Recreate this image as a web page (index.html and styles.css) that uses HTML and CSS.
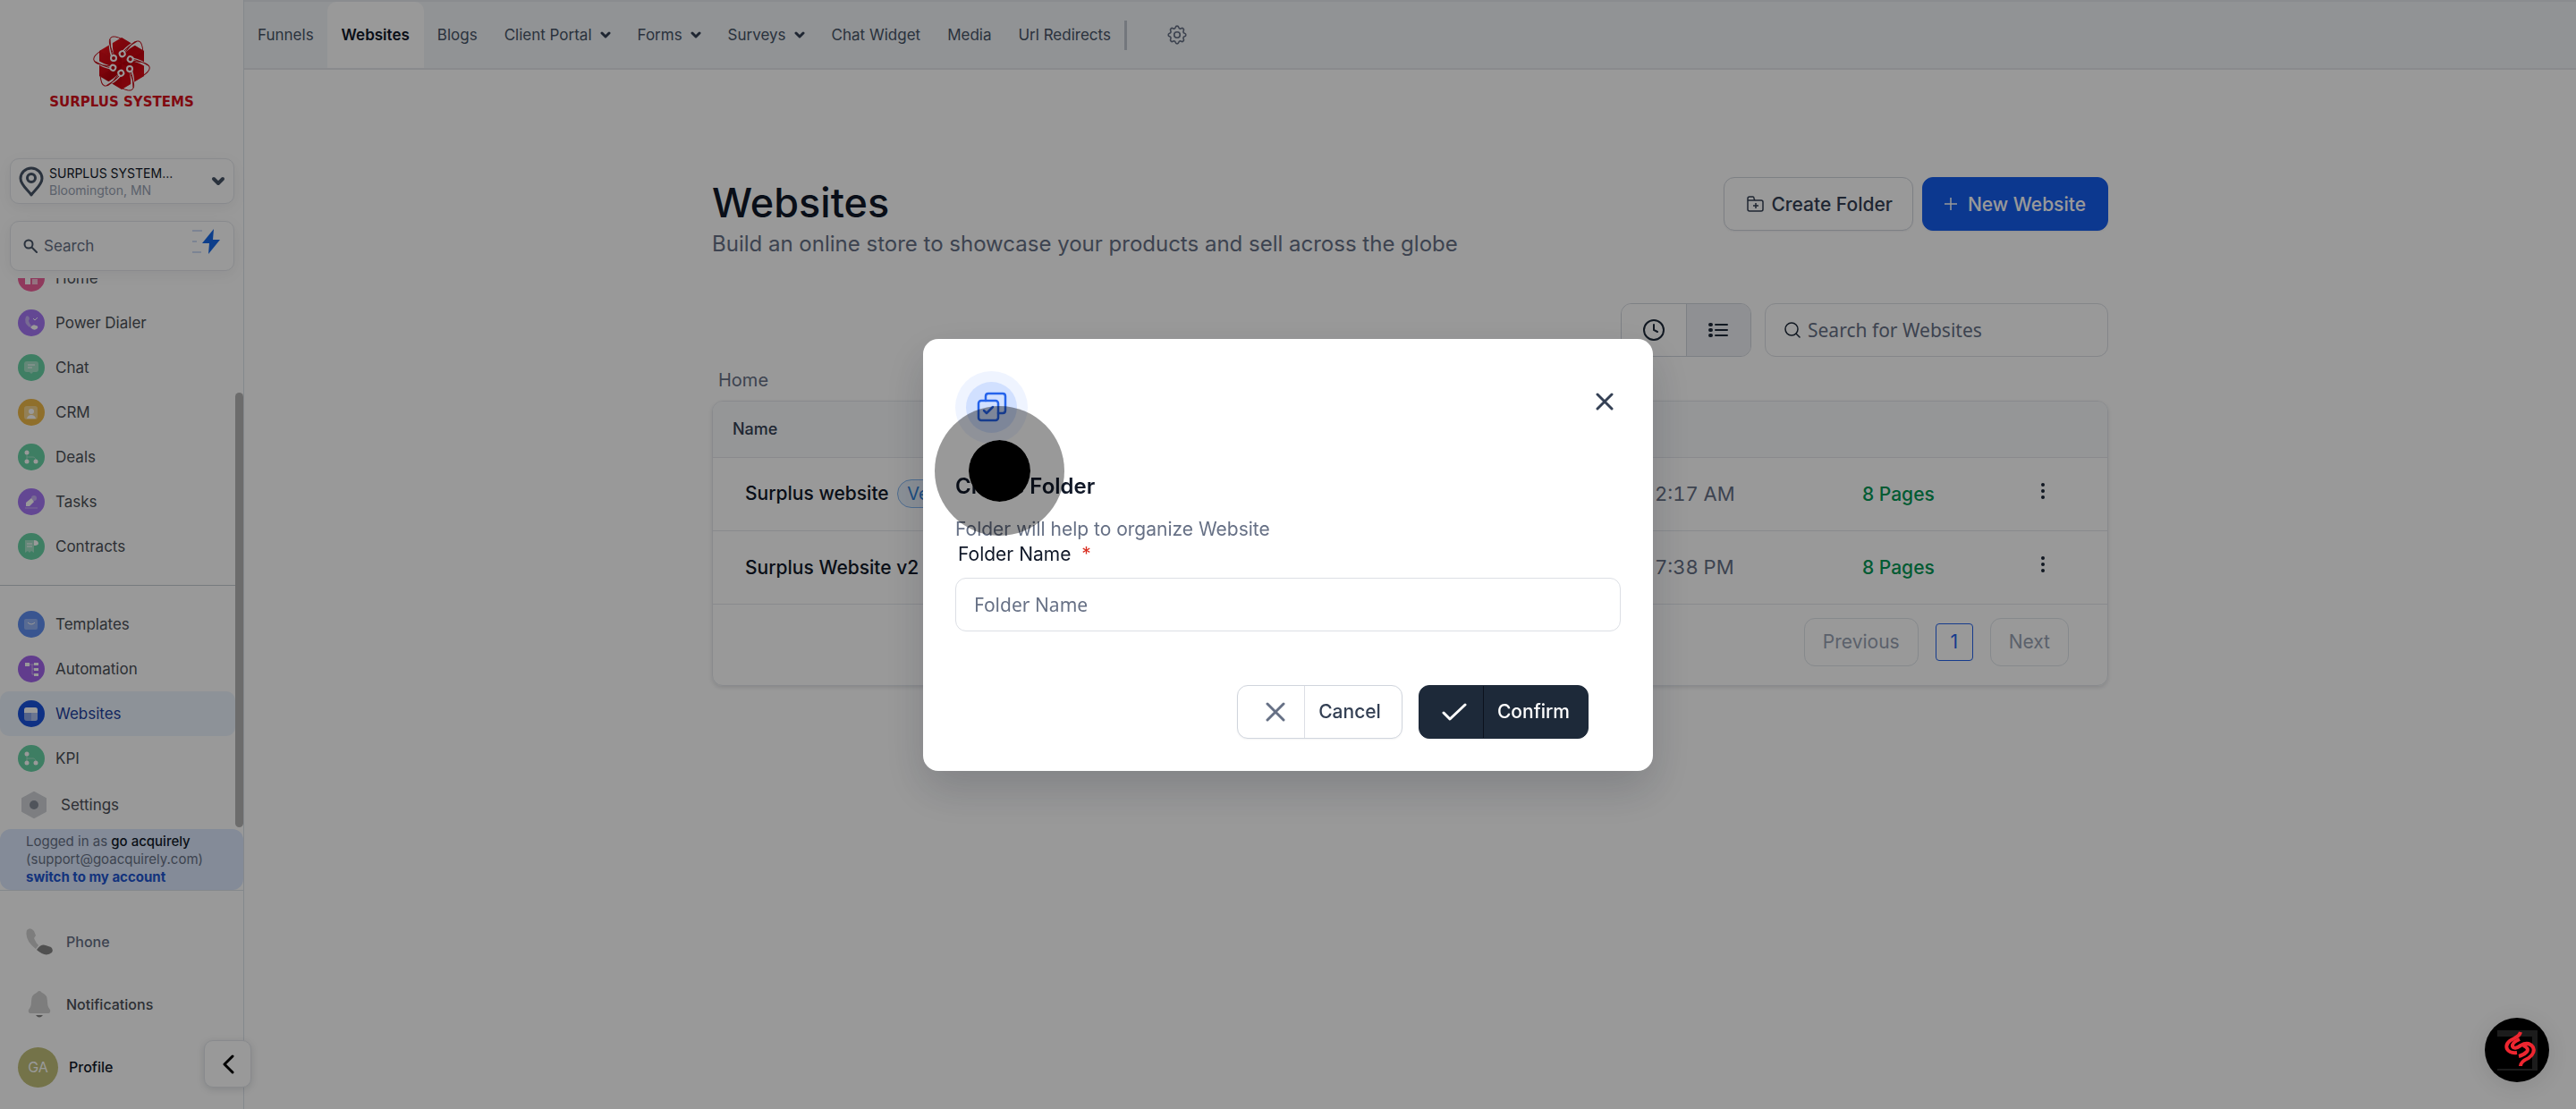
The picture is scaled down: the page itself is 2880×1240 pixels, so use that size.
FILE: index.html
```html
<!DOCTYPE html>
<html lang="en">

<head>
    <meta charset="UTF-8">
    <meta name="viewport" content="width=device-width, initial-scale=1.0">
    <title>Websites</title>
    <link rel="stylesheet" href="styles.css">
</head>

<body>
    <div class="app">
        <!-- Sidebar -->
        <aside class="sidebar">
            <div class="logo">
                <svg class="logo-mark" width="64" height="64" viewBox="0 0 64 64">
                    <defs>
                        <linearGradient id="logoRed" x1="0" y1="0" x2="1" y2="1">
                            <stop offset="0" stop-color="#ff1a22" />
                            <stop offset="0.5" stop-color="#b8000c" />
                            <stop offset="1" stop-color="#f0101c" />
                        </linearGradient>
                        <g id="arm">
                            <path d="M20 5Q19 15 22 24" fill="none" stroke="#fff" stroke-width="4" />
                            <path d="M24 24C20 15 16 7 20 3Q23 0 33 5M19 5Q19 16 22 24" fill="none" stroke="#c4101a" stroke-width="1" />
                            <circle cx="23" cy="26" r="3" fill="#c00512" stroke="#fff" stroke-width="2" />
                        </g>
                    </defs>
                    <path d="M32 3L57 18V46L32 61L7 46V18Z" fill="url(#logoRed)" />
                    <path d="M32 32L32 3L57 18ZM32 32L57 46L32 61ZM32 32L7 46V18Z" fill="#d60a16" opacity="0.6" />
                    <use href="#arm" />
                    <use href="#arm" transform="rotate(60 32 32)" />
                    <use href="#arm" transform="rotate(120 32 32)" />
                    <use href="#arm" transform="rotate(180 32 32)" />
                    <use href="#arm" transform="rotate(240 32 32)" />
                    <use href="#arm" transform="rotate(300 32 32)" />
                </svg>
                <span class="logo-text">SURPLUS SYSTEMS</span>
            </div>

            <button class="location" type="button">
                <svg width="28" height="34" viewBox="0 0 28 34" fill="none" stroke="#475467" stroke-width="3">
                    <path d="M14 32C11 27 2 21 2 13.500A12 11.500 0 0 1 26 13.500C26 21 17 27 14 32Z" stroke-linejoin="round" />
                    <circle cx="14" cy="13" r="4.500" />
                </svg>
                <span class="location-text">
                    <span class="location-name">SURPLUS SYSTEM...</span>
                    <span class="location-city">Bloomington, MN</span>
                </span>
                <svg width="16" height="12" viewBox="0 0 16 12" fill="none" stroke="#475467" stroke-width="4" stroke-linecap="round" stroke-linejoin="round">
                    <path d="M3 3L8 8L13 3" />
                </svg>
            </button>

            <div class="side-search">
                <svg width="16" height="16" viewBox="0 0 16 16" fill="none" stroke="#475467" stroke-width="2" stroke-linecap="round">
                    <circle cx="6" cy="6" r="4.500" />
                    <path d="M10 10L15 15" />
                </svg>
                <input type="text" placeholder="Search" aria-label="Search">
                <svg class="bolt" width="32" height="30" viewBox="0 0 32 30">
                    <path d="M0 3H11M0 15H5M0 27H10" stroke="#cfdcf5" stroke-width="2" />
                    <path d="M24 1L11 17H19L18 29L31 13H23Z" fill="#1668e8" />
                </svg>
            </div>

            <nav class="side-nav">
                <ul class="menu menu-top">
                    <li><a href="#">
                        <svg viewBox="0 0 30 30"><circle cx="15" cy="15" r="15" fill="#f0629c" /><path d="M8 8H14V22H8Z" fill="#fff" /><path d="M16 8H22V14H16ZM16 16H22V22H16Z" fill="#fff" opacity="0.6" /></svg>
                        Home</a></li>
                    <li><a href="#">
                        <svg viewBox="0 0 30 30"><circle cx="15" cy="15" r="15" fill="#a677f6" /><path d="M9 8Q12 6 13 10L12 13Q13 16 15 18L13 20Q6 15 9 8Z" fill="#c9b2f5" /><path d="M14 20Q17 16 20 18Q23 18 22 21Q18 25 14 20Z" fill="#fff" /><path d="M17 10L19 12L22 9" fill="none" stroke="#fff" stroke-width="1" /></svg>
                        Power Dialer</a></li>
                    <li><a href="#">
                        <svg viewBox="0 0 30 30"><circle cx="15" cy="15" r="15" fill="#68d3a6" /><path d="M10 8H20Q23 8 23 11V17Q23 20 20 20H17L15 22L13 20H10Q7 20 7 17V11Q7 8 10 8Z" fill="#a5e3c9" /><path d="M11 12H19M11 15H16" stroke="#fff" stroke-width="1" /></svg>
                        Chat</a></li>
                    <li><a href="#">
                        <svg viewBox="0 0 30 30"><circle cx="15" cy="15" r="15" fill="#efb948" /><rect x="7" y="8" width="15" height="15" rx="3" fill="#f5d590" /><circle cx="15" cy="14" r="3" fill="#fff" /><path d="M10 22Q11 18 15 18Q19 18 20 22Z" fill="#fff" /></svg>
                        CRM</a></li>
                    <li><a href="#">
                        <svg viewBox="0 0 30 30"><circle cx="15" cy="15" r="15" fill="#68d3a6" /><path d="M10 10V20M10 15H17Q20 15 20 20" fill="none" stroke="#a5e3c9" stroke-width="1" /><circle cx="10" cy="10" r="2.500" fill="#fff" /><circle cx="10" cy="20" r="2.500" fill="#fff" /><circle cx="20" cy="20" r="2.500" fill="#fff" /></svg>
                        Deals</a></li>
                    <li><a href="#">
                        <svg viewBox="0 0 30 30"><circle cx="15" cy="15" r="15" fill="#a677f6" /><circle cx="18" cy="11" r="3" fill="#c9b2f5" /><path d="M9 20V16L15 11L18 15L13 20Z" fill="#fff" /><path d="M8 22H22" stroke="#c9b2f5" stroke-width="1" /></svg>
                        Tasks</a></li>
                    <li><a href="#">
                        <svg viewBox="0 0 30 30"><circle cx="15" cy="15" r="15" fill="#68d3a6" /><path d="M8 8H18V22L15 20L13 22L11 20L8 22Z" fill="#a5e3c9" /><path d="M18 8Q23 8 23 12Q22 14 18 14Z" fill="#fff" /><path d="M10 12H16M10 15H16" stroke="#fff" stroke-width="1" /></svg>
                        Contracts</a></li>
                </ul>
                <ul class="menu menu-bottom">
                    <li><a href="#">
                        <svg viewBox="0 0 30 30"><circle cx="15" cy="15" r="15" fill="#5f8ef0" /><rect x="7" y="9" width="15" height="12" rx="2" fill="#93b3f5" /><path d="M11 13Q15 17 19 13" fill="none" stroke="#fff" stroke-width="1" /></svg>
                        Templates</a></li>
                    <li><a href="#">
                        <svg viewBox="0 0 30 30"><circle cx="15" cy="15" r="15" fill="#a265ec" /><path d="M13 10H18M16 10V21H18M16 15H18" fill="none" stroke="#cfb2f2" stroke-width="1" /><path d="M8 8H13V12H8ZM18 8H23V11H18ZM18 14H23V17H18ZM18 20H23V23H18Z" fill="#fff" /></svg>
                        Automation</a></li>
                    <li><a class="current" href="#">
                        <svg viewBox="0 0 30 30"><circle cx="15" cy="15" r="15" fill="#1a53dc" /><rect x="7" y="8" width="15" height="15" rx="3" fill="#8ba5e6" /><path d="M7 14V11Q7 8 10 8H19Q22 8 22 11V14Z" fill="#fff" /><path d="M15 14H22V20Q22 23 19 23H15Z" fill="#b1c3f0" /></svg>
                        Websites</a></li>
                    <li><a href="#">
                        <svg viewBox="0 0 30 30"><circle cx="15" cy="15" r="15" fill="#68d3a6" /><path d="M10 10V20M10 15H17Q20 15 20 20" fill="none" stroke="#a5e3c9" stroke-width="1" /><circle cx="10" cy="10" r="2.500" fill="#fff" /><circle cx="10" cy="20" r="2.500" fill="#fff" /><circle cx="20" cy="20" r="2.500" fill="#fff" /></svg>
                        KPI</a></li>
                </ul>
                <a class="settings" href="#">
                    <svg viewBox="0 0 30 30"><path d="M15 1L28 8V22L15 29L2 22V8Z" fill="#d0d3d8" stroke="#d0d3d8" stroke-width="2" stroke-linejoin="round" /><circle cx="15" cy="15" r="5" fill="#868c98" /></svg>
                    Settings</a>
                <div class="scrollbar"></div>
            </nav>

            <div class="account">
                Logged in as <b>go acquirely</b><br>
                (support@goacquirely.com)<br>
                <a href="#">switch to my account</a>
            </div>

            <div class="side-bottom">
                <a class="phone" href="#">
                    <svg width="32" height="32" viewBox="0 0 32 32"><path d="M2 3Q6 -1 10 4L12 9L10 12Q12 17 15 20L12 24Q-1 14 2 3Z" fill="#d0d0d0" /><path d="M13 25Q18 18 23 20L29 22Q32 25 30 28Q23 34 13 25Z" fill="#858585" /></svg>
                    Phone</a>
                <a class="notifications" href="#">
                    <svg width="32" height="32" viewBox="0 0 32 32"><path d="M13 3Q16 -1 19 3Q25 5 25 13Q25 19 28 22Q29 26 25 26H7Q3 26 4 22Q7 19 7 13Q7 5 13 3Z" fill="#d0d0d0" /><path d="M12 28H20Q16 33 12 28Z" fill="#858585" /></svg>
                    Notifications</a>
                <a class="profile" href="#"><span class="avatar">GA</span>Profile</a>
                <button class="collapse" type="button" aria-label="Collapse sidebar">
                    <svg width="14" height="22" viewBox="0 0 14 22" fill="none" stroke="#000" stroke-width="3" stroke-linecap="round" stroke-linejoin="round">
                        <path d="M12 2L3 11L12 20" />
                    </svg>
                </button>
            </div>
        </aside>

        <div class="main">
            <!-- Top navigation -->
            <nav class="topbar">
                <a href="#">Funnels</a>
                <a class="active" href="#">Websites</a>
                <a href="#">Blogs</a>
                <a href="#">Client Portal <svg width="12" height="9" viewBox="0 0 12 9"><path d="M2 2L6 6L10 2" /></svg></a>
                <a href="#">Forms <svg width="12" height="9" viewBox="0 0 12 9"><path d="M2 2L6 6L10 2" /></svg></a>
                <a href="#">Surveys <svg width="12" height="9" viewBox="0 0 12 9"><path d="M2 2L6 6L10 2" /></svg></a>
                <a href="#">Chat Widget</a>
                <a href="#">Media</a>
                <a href="#">Url Redirects</a>
                <span class="separator"></span>
                <button class="gear" type="button" aria-label="Settings">
                    <svg width="24" height="24" viewBox="1 1 22 22" fill="none" stroke="#667085" stroke-width="1.500" stroke-linejoin="round">
                        <path d="M10.325 4.317c.426-1.756 2.924-1.756 3.350 0a1.724 1.724 0 0 0 2.573 1.066c1.543-.940 3.310.826 2.370 2.370a1.724 1.724 0 0 0 1.065 2.572c1.756.426 1.756 2.924 0 3.350a1.724 1.724 0 0 0-1.066 2.573c.940 1.543-.826 3.310-2.370 2.370a1.724 1.724 0 0 0-2.572 1.065c-.426 1.756-2.924 1.756-3.350 0a1.724 1.724 0 0 0-2.573-1.066c-1.543.940-3.310-.826-2.370-2.370a1.724 1.724 0 0 0-1.065-2.572c-1.756-.426-1.756-2.924 0-3.350a1.724 1.724 0 0 0 1.066-2.573c-.940-1.543.826-3.310 2.370-2.370a1.724 1.724 0 0 0 2.572-1.065z" />
                        <circle cx="12" cy="12" r="3" />
                    </svg>
                </button>
            </nav>

            <!-- Page content -->
            <main class="content">
                <header class="page-head">
                    <div>
                        <h1>Websites</h1>
                        <p>Build an online store to showcase your products and sell across the globe</p>
                    </div>
                    <div class="head-actions">
                        <button class="btn btn-folder" type="button">
                            <svg width="19" height="18" viewBox="0 0 19 18" fill="none" stroke="#344054" stroke-width="1.500" stroke-linejoin="round">
                                <path d="M1 5V3Q1 1 3 1H7Q8 1 8 3L9 5H1V15Q1 17 3 17H16Q18 17 18 15V7Q18 5 16 5H9" />
                                <path d="M10 8V14M7 11H13" />
                            </svg>
                            Create Folder
                        </button>
                        <button class="btn btn-primary" type="button">
                            <svg width="14" height="14" viewBox="0 0 14 14" fill="none" stroke="#fff" stroke-width="1.500">
                                <path d="M7 0V14M0 7H14" />
                            </svg>
                            New Website
                        </button>
                    </div>
                </header>

                <div class="tools">
                    <div class="view-toggle">
                        <button type="button" aria-label="Recent">
                            <svg width="24" height="24" viewBox="0 0 24 24" fill="none" stroke="#1d2939" stroke-width="2" stroke-linecap="round">
                                <circle cx="12" cy="12" r="11" />
                                <path d="M12 6V12L16 14" />
                            </svg>
                        </button>
                        <button class="on" type="button" aria-label="List">
                            <svg width="22" height="18" viewBox="0 0 22 18" fill="none" stroke="#1d2939" stroke-width="2" stroke-linecap="round">
                                <path d="M8 3H21M8 9H21M8 15H21" />
                                <path d="M2 3H3M2 9H3M2 15H3" stroke-width="4" />
                            </svg>
                        </button>
                    </div>
                    <label class="search-box">
                        <svg width="18" height="18" viewBox="0 0 18 18" fill="none" stroke="#1d2939" stroke-width="1.500" stroke-linecap="round">
                            <circle cx="8" cy="8" r="7" />
                            <path d="M13 13L17 17" />
                        </svg>
                        <input type="text" placeholder="Search for Websites" aria-label="Search for Websites">
                    </label>
                </div>

                <a class="crumb" href="#">Home</a>

                <section class="card">
                    <table>
                        <colgroup>
                            <col class="col-name">
                            <col class="col-date">
                            <col class="col-pages">
                            <col class="col-menu">
                        </colgroup>
                        <thead>
                            <tr><th>Name</th><th></th><th></th><th></th></tr>
                        </thead>
                        <tbody>
                            <tr>
                                <td class="name">Surplus website <span class="badge">Ver</span></td>
                                <td class="date">2:17 AM</td>
                                <td class="pages">8 Pages</td>
                                <td class="more"><button type="button" aria-label="More"><svg width="6" height="20" viewBox="0 0 6 20" fill="#1d2939"><circle cx="3" cy="3" r="2" /><circle cx="3" cy="10" r="2" /><circle cx="3" cy="17" r="2" /></svg></button></td>
                            </tr>
                            <tr>
                                <td class="name">Surplus Website v2</td>
                                <td class="date">7:38 PM</td>
                                <td class="pages">8 Pages</td>
                                <td class="more"><button type="button" aria-label="More"><svg width="6" height="20" viewBox="0 0 6 20" fill="#1d2939"><circle cx="3" cy="3" r="2" /><circle cx="3" cy="10" r="2" /><circle cx="3" cy="17" r="2" /></svg></button></td>
                            </tr>
                        </tbody>
                    </table>
                    <div class="pagination">
                        <button class="step" type="button" disabled>Previous</button>
                        <button class="page" type="button">1</button>
                        <button class="step" type="button" disabled>Next</button>
                    </div>
                </section>
            </main>
        </div>
    </div>

    <!-- Create folder dialog -->
    <div class="overlay">
        <form class="modal" role="dialog" aria-labelledby="modalTitle">
            <div class="modal-top">
                <span class="modal-icon">
                    <span>
                        <svg width="34" height="34" viewBox="0 0 34 34" fill="none" stroke="#2563eb" stroke-width="2.500" stroke-linecap="round" stroke-linejoin="round">
                            <rect x="2" y="10" width="22" height="22" rx="3" />
                            <path d="M10 10V5Q10 2 13 2H29Q32 2 32 5V21Q32 24 29 24H24" />
                            <path d="M8 21L11 24L18 17" />
                        </svg>
                    </span>
                </span>
                <button class="close" type="button" aria-label="Close">
                    <svg width="20" height="20" viewBox="0 0 20 20" fill="none" stroke="#344054" stroke-width="3" stroke-linecap="round">
                        <path d="M2 2L18 18M18 2L2 18" />
                    </svg>
                </button>
            </div>
            <h2 id="modalTitle">Create Folder</h2>
            <p>Folder will help to organize Website</p>
            <label for="folderName">Folder Name <span>*</span></label>
            <input type="text" id="folderName" placeholder="Folder Name">
            <div class="modal-actions">
                <button class="btn split" type="button">
                    <span class="split-icon">
                        <svg width="22" height="22" viewBox="0 0 22 22" fill="none" stroke="#667085" stroke-width="3" stroke-linecap="round"><path d="M2 2L20 20M20 2L2 20" /></svg>
                    </span>
                    <span>Cancel</span>
                </button>
                <button class="btn split confirm" type="button">
                    <span class="split-icon">
                        <svg width="28" height="20" viewBox="0 0 28 20" fill="none" stroke="#fff" stroke-width="3" stroke-linecap="round" stroke-linejoin="round"><path d="M2 11L9 18L26 2" /></svg>
                    </span>
                    <span>Confirm</span>
                </button>
            </div>
        </form>
    </div>

    <!-- Click marker -->
    <div class="pointer"></div>

    <button class="chat" type="button" aria-label="Open chat">
        <svg width="72" height="72" viewBox="0 0 72 72">
            <path d="M14 14H59V59H14V57H53V21H14Z" fill="#1c1c1c" />
            <g fill="none" stroke="#ee2630" stroke-width="4">
                <path d="M40 16Q39 20 33 23Q22 28 25 35Q28 40 36 39" />
                <path d="M39 24Q30 28 31 32Q33 36 40 31Q49 26 54 33Q57 39 49 45Q40 49 40 54" />
                <path d="M43 31Q50 34 47 38Q43 42 38 43" />
            </g>
        </svg>
    </button>
</body>

</html>
```
FILE: styles.css
```css
* {
    box-sizing: border-box;
}

body {
    margin: 0;
    font-family: Inter, sans-serif;
    font-size: 21px;
    color: #101828;
    background-color: #fff;
}

button,
input {
    font: inherit;
    color: inherit;
}

button {
    cursor: pointer;
}

a {
    color: inherit;
    text-decoration: none;
}

svg {
    flex: none;
}

.app {
    display: flex;
    min-height: 100vh;
}

/* Sidebar */
.sidebar {
    display: flex;
    flex-direction: column;
    flex: none;
    width: 273px;
    height: 100vh;
    border-right: 1px solid #dde3ea;
    font-size: 17px;
}

.logo {
    display: flex;
    flex-direction: column;
    align-items: center;
    gap: 4px;
    padding: 39px 0 55px;
}

.logo-text {
    font-family: "DejaVu Sans", sans-serif;
    font-weight: bold;
    font-size: 15px;
    line-height: 15px;
    color: #d60f1c;
}

.location,
.side-search {
    display: flex;
    align-items: center;
    margin: 0 10px 0 11px;
    border: 1px solid #e4e7ec;
    border-radius: 10px;
    background-color: #fff;
    box-shadow: 0 4px 16px rgba(16, 24, 40, 0.06);
}

.location {
    gap: 6px;
    height: 51px;
    padding: 0 9px;
    text-align: left;
    font-size: 14px;
    line-height: 19px;
}

.location-text {
    display: flex;
    flex-direction: column;
    flex: 1;
}

.location-city {
    color: #98a2b3;
}

.side-search {
    position: relative;
    z-index: 1;
    height: 56px;
    margin-top: 19px;
    padding: 0 14px;
    gap: 7px;
}

.side-search input {
    flex: 1;
    min-width: 0;
    padding: 0;
    border: none;
    outline: none;
    background: none;
}

.bolt {
    margin-bottom: 10px;
}

.side-nav {
    position: relative;
    flex: 1;
    margin-top: 8px;
    overflow: hidden;
    color: #4b5058;
}

.menu {
    margin: 0;
    padding: 0 9px 0 0;
    list-style: none;
}

/* list is scrolled half a row down */
.menu-top {
    margin-top: -25px;
    padding-bottom: 18px;
}

.menu-bottom {
    margin-right: 9px;
    padding: 18px 0 0;
    border-top: 1px solid #c5cbd3;
}

.menu a,
.settings {
    display: flex;
    align-items: center;
    gap: 12px;
    height: 50px;
    padding-left: 20px;
}

.menu svg,
.settings svg {
    width: 30px;
    height: 30px;
}

.menu .current {
    border-radius: 10px;
    background-color: #ecf3fd;
    color: #1e429f;
}

.settings {
    gap: 15px;
    height: 54px;
    padding-left: 23px;
}

.scrollbar {
    position: absolute;
    top: 128px;
    right: 0;
    width: 9px;
    bottom: 2px;
    border-radius: 5px;
    background-color: #b5b5b5;
}

.account {
    padding: 4px 29px;
    border-radius: 12px;
    background-color: #dce8fd;
    color: #667085;
    font-size: 15px;
    line-height: 20px;
    white-space: nowrap;
}

.account b {
    font-weight: 500;
    color: #101828;
}

.account a {
    font-weight: 700;
    color: #1e55d0;
}

.side-bottom {
    position: relative;
    display: flex;
    flex-direction: column;
    height: 245px;
    padding-top: 22px;
    border-top: 1px solid #dde3ea;
    font-size: 16px;
    font-weight: 500;
    color: #4b5058;
}

.side-bottom a {
    display: flex;
    align-items: center;
    gap: 14px;
    height: 70px;
    padding-left: 28px;
}

.side-bottom .phone {
    color: #667085;
}

.side-bottom .profile {
    gap: 12px;
    padding-left: 20px;
    color: #101828;
}

.avatar {
    display: flex;
    align-items: center;
    justify-content: center;
    width: 45px;
    height: 45px;
    border-radius: 50%;
    background-color: #c1c07a;
    color: #fff;
    font-weight: 400;
}

.collapse {
    position: absolute;
    right: -9px;
    bottom: 24px;
    display: flex;
    align-items: center;
    justify-content: center;
    width: 53px;
    height: 53px;
    border: 1px solid #e4e7ec;
    border-radius: 10px;
    background-color: #fff;
    box-shadow: 0 2px 8px rgba(16, 24, 40, 0.15);
}

/* Top navigation */
.main {
    flex: 1;
    min-width: 0;
}

.topbar {
    display: flex;
    align-items: center;
    height: 78px;
    border-top: 2px solid #e6eaee;
    border-bottom: 2px solid #e4e7ec;
    background-color: #f2f5f8;
    color: #475467;
    font-size: 17px;
}

.topbar a {
    display: flex;
    align-items: center;
    gap: 9px;
    height: 100%;
    padding: 0 15px;
}

.topbar .active {
    padding: 0 16px;
    border-radius: 10px 10px 0 0;
    background-color: #fff;
    color: #101828;
    font-weight: 600;
}

.topbar a svg {
    fill: none;
    stroke: #344054;
    stroke-width: 3;
    stroke-linecap: round;
    stroke-linejoin: round;
}

.separator {
    width: 3px;
    height: 33px;
    background-color: #c0c6d0;
}

.gear {
    display: flex;
    margin-left: 44px;
    padding: 0;
    border: none;
    background: none;
}

/* Page content */
.content {
    width: 60%;
    max-width: 1561px;
    margin: 0 auto;
    padding-top: 120px;
}

.page-head,
.head-actions,
.tools {
    display: flex;
}

.page-head {
    justify-content: space-between;
    align-items: flex-start;
}

h1 {
    margin: 0;
    font-size: 45px;
    font-weight: 500;
    line-height: 58px;
}

.page-head p {
    margin: 0;
    font-size: 24px;
    line-height: 34px;
    color: #667085;
}

.head-actions {
    gap: 10px;
}

.btn {
    display: flex;
    align-items: center;
    justify-content: center;
    gap: 9px;
    height: 60px;
    padding: 0 24px;
    border: 1px solid #d0d5dd;
    border-radius: 12px;
    background-color: #fff;
    box-shadow: 0 1px 2px rgba(16, 24, 40, 0.05);
    color: #344054;
    font-weight: 500;
}

.btn-folder {
    gap: 8px;
    padding: 0 22px 0 25px;
}

.btn-primary {
    gap: 12px;
    border-color: #155eef;
    background-color: #155eef;
    color: #fff;
}

.tools {
    justify-content: flex-end;
    gap: 15px;
    margin-top: 49px;
}

.view-toggle {
    display: flex;
    overflow: hidden;
    width: 146px;
    border: 1px solid #d0d5dd;
    border-radius: 12px;
}

.view-toggle button {
    display: flex;
    align-items: center;
    justify-content: center;
    flex: 1;
    border: none;
    background-color: #fff;
}

.view-toggle .on {
    border-left: 1px solid #d0d5dd;
    background-color: #eff1f5;
}

.search-box {
    display: flex;
    align-items: center;
    gap: 8px;
    width: 384px;
    height: 60px;
    padding: 0 21px;
    border: 1px solid #dcdfe5;
    border-radius: 12px;
}

.search-box input {
    flex: 1;
    min-width: 0;
    padding: 0;
    border: none;
    outline: none;
    font-family: "Noto Sans", sans-serif;
}

input::placeholder {
    color: #667085;
    opacity: 1;
}

.crumb {
    display: block;
    margin: 12px 7px 9px;
    font-size: 20px;
    line-height: 28px;
    color: #667085;
}

.card {
    overflow: hidden;
    border: 1px solid #e4e7ec;
    border-radius: 12px;
    box-shadow: 0 2px 4px rgba(16, 24, 40, 0.12);
}

table {
    width: 100%;
    table-layout: fixed;
    border-collapse: collapse;
}

.col-date {
    width: 232px;
}

.col-pages {
    width: 165px;
}

.col-menu {
    width: 109px;
}

th {
    height: 62px;
    padding: 0 22px;
    border-bottom: 1px solid #e4e7ec;
    background-color: #f8fafc;
    color: #344054;
    font-size: 18px;
    font-weight: 500;
    text-align: left;
}

td {
    height: 82px;
    padding: 0;
    border-bottom: 1px solid #e4e7ec;
}

td.name {
    padding-left: 36px;
    font-weight: 500;
}

.badge {
    display: inline-block;
    margin-left: 4px;
    padding: 0 10px;
    border: 1px solid #84b6f0;
    border-radius: 16px;
    background-color: #e8f1fc;
    color: #2f7fd6;
    font-size: 20px;
    font-weight: 400;
    line-height: 30px;
}

.date {
    color: #667085;
    font-size: 22px;
    font-variant-numeric: tabular-nums;
}

.pages {
    color: #039855;
    font-weight: 500;
}

.more button {
    display: flex;
    margin-bottom: 6px;
    padding: 0 34px;
    border: none;
    background: none;
}

.pagination {
    display: flex;
    align-items: center;
    justify-content: flex-end;
    gap: 19px;
    padding: 15px 43px 21px;
}

.step {
    height: 54px;
    padding: 0 20px;
    border: 1px solid #dfe4ea;
    border-radius: 12px;
    background-color: #fff;
    color: #98a2b3;
}

.page {
    width: 42px;
    height: 42px;
    padding: 0;
    border: 1px solid #2563eb;
    border-radius: 4px;
    background-color: #fff;
    color: #2563eb;
}

/* Dialog */
.overlay {
    position: fixed;
    z-index: 2;
    inset: 0;
    display: flex;
    align-items: center;
    justify-content: center;
    background-color: rgba(0, 0, 0, 0.4);
}

.modal {
    width: 816px;
    padding: 36px;
    border-radius: 17px;
    background-color: #fff;
    box-shadow: 0 20px 48px rgba(16, 24, 40, 0.18);
}

.modal-top {
    display: flex;
    align-items: flex-start;
    justify-content: space-between;
    margin-bottom: 32px;
}

.modal-icon {
    padding: 12px;
    border-radius: 50%;
    background-color: #eff4ff;
}

.modal-icon span {
    display: flex;
    align-items: center;
    justify-content: center;
    width: 57px;
    height: 57px;
    border-radius: 50%;
    background-color: #d1e0ff;
}

.close {
    display: flex;
    padding: 24px 8px;
    border: none;
    background: none;
}

.modal h2 {
    margin: 0;
    font-size: 24px;
    font-weight: 600;
    line-height: 32px;
}

.modal p {
    margin: 16px 0 0;
    line-height: 32px;
    color: #667085;
}

.modal label {
    display: block;
    margin-left: 3px;
    line-height: 24px;
}

.modal label span {
    margin-left: 6px;
    color: #d92d20;
}

.modal input {
    width: 100%;
    height: 60px;
    margin-top: 14px;
    padding: 0 20px;
    border: 1px solid #dcdfe5;
    border-radius: 12px;
    font-family: "Noto Sans", sans-serif;
}

.modal-actions {
    display: flex;
    justify-content: flex-end;
    gap: 18px;
    margin-top: 60px;
    padding-right: 36px;
}

.split {
    gap: 15px;
    padding-left: 0;
    padding-right: 23px;
}

.split-icon {
    display: flex;
    align-items: center;
    justify-content: flex-end;
    width: 75px;
    height: 100%;
    padding-right: 21px;
    border-right: 1px solid #dcdfe5;
}

.confirm {
    padding-right: 20px;
    border-color: #1d2939;
    background-color: #1d2939;
    color: #fff;
}

.confirm .split-icon {
    width: 72px;
    padding-right: 18px;
    border-color: #0c111d;
}

.pointer {
    position: absolute;
    z-index: 3;
    top: 454px;
    left: 1045px;
    width: 145px;
    height: 145px;
    border: 38px solid rgba(0, 0, 0, 0.4);
    border-radius: 50%;
    background-color: #000;
    background-clip: padding-box;
}

.chat {
    position: fixed;
    z-index: 3;
    right: 30px;
    bottom: 30px;
    display: flex;
    width: 72px;
    height: 72px;
    padding: 0;
    border: none;
    border-radius: 50%;
    background-color: #000;
    box-shadow: 0 4px 24px rgba(0, 0, 0, 0.1);
}
```
